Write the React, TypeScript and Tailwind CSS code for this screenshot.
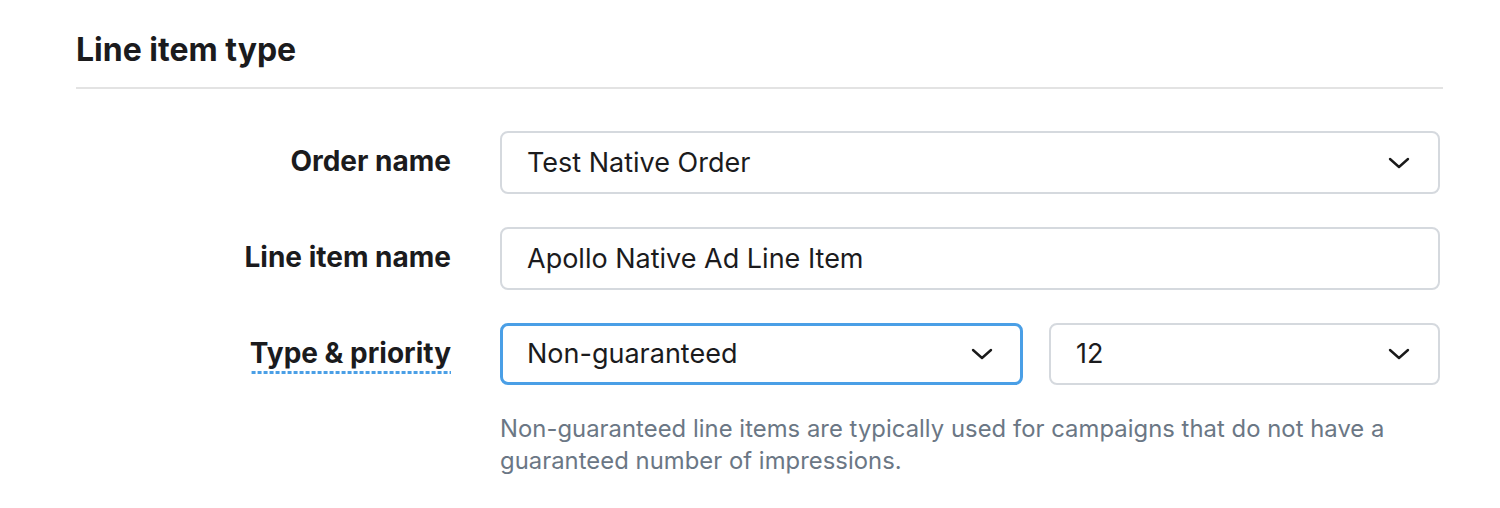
import React from "react";

const Chevron = () => (
  <svg width="22" height="12" viewBox="0 0 22 12" fill="none" className="shrink-0">
    <path d="M2 2 L11 10 L20 2" stroke="#1a1a1a" strokeWidth="2.4" strokeLinecap="round" strokeLinejoin="round" />
  </svg>
);

export default function App() {
  return (
    <div className="w-[1500px] h-[508px] bg-white font-['Inter',sans-serif] text-[#1b1b1d]">
      <div className="ml-[76px] w-[1367px] pt-[31px]">
        <h2 className="text-[32px] leading-[38px] font-bold tracking-[0px] pb-[18px] border-b-2 border-[#e3e3e3]">
          Line item type
        </h2>
        <div className="grid grid-cols-[375px_940px] gap-x-[49px] gap-y-[33px] mt-[42px]">
          <div className="flex items-center justify-end h-[63px] pb-[3px]">
            <span className="text-[28px] font-bold leading-[32px]">Order name</span>
          </div>
          <div className="flex items-center justify-between h-[63px] rounded-[8px] border-2 border-[#d5d9de] pl-[25px] pr-[28px]">
            <span className="text-[27px] leading-[32px]">Test Native Order</span>
            <Chevron />
          </div>

          <div className="flex items-center justify-end h-[63px] pb-[3px]">
            <span className="text-[28px] font-bold leading-[32px]">Line item name</span>
          </div>
          <div className="flex items-center h-[63px] rounded-[8px] border-2 border-[#d5d9de] pl-[25px] pr-[28px]">
            <span className="text-[27px] leading-[32px]">Apollo Native Ad Line Item</span>
          </div>

          <div className="flex items-center justify-end h-[62px]">
            <span className="text-[28px] font-bold leading-[32px] pb-[5px] bg-[linear-gradient(to_right,#4a9fe6_65%,transparent_65%)] bg-[length:6px_3px] bg-repeat-x bg-bottom mt-[2px]">
              Type &amp; priority
            </span>
          </div>
          <div>
            <div className="flex gap-[26px]">
              <div className="flex items-center justify-between w-[523px] h-[62px] rounded-[8px] border-[3px] border-[#4a9fe6] pl-[24px] pr-[27px]">
                <span className="text-[27px] leading-[32px]">Non-guaranteed</span>
                <Chevron />
              </div>
              <div className="flex items-center justify-between flex-1 h-[62px] rounded-[8px] border-2 border-[#d5d9de] pl-[25px] pr-[28px]">
                <span className="text-[27px] leading-[32px]">12</span>
                <Chevron />
              </div>
            </div>
            <p className="mt-[28px] text-[23.8px] leading-[32px] tracking-[0.05px] text-[#6b7785] w-[940px]">
              Non-guaranteed line items are typically used for campaigns that do not have a guaranteed number of impressions.
            </p>
          </div>
        </div>
      </div>
    </div>
  );
}
